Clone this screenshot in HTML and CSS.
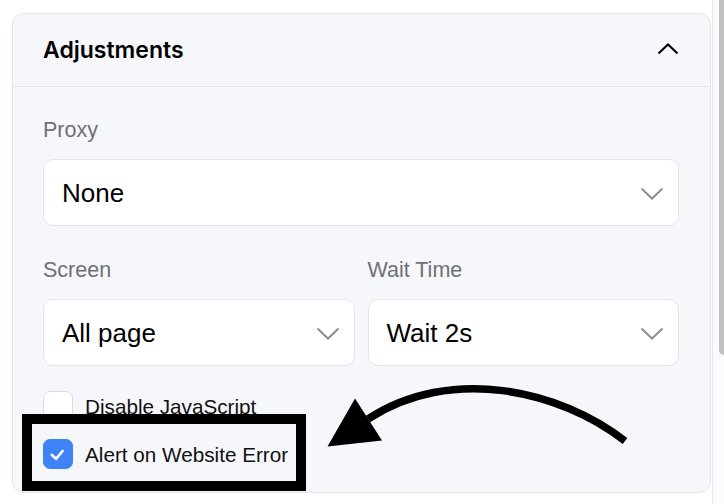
FILE: index.html
```html
<!DOCTYPE html>
<html>
<head>
<meta charset="utf-8">
<link rel="stylesheet" href="styles.css">
</head>
<body>
<div class="page">
  <div class="main">
    <section class="card">
      <header class="card-header">
        <h2 class="title">Adjustments</h2>
        <svg class="chev-up" width="22" height="12" viewBox="0 0 22 12"><path d="M1.5 10.5 L11 1.5 L20.5 10.5" fill="none" stroke="#000" stroke-width="2"/></svg>
      </header>
      <div class="card-body">
        <div class="field first">
          <div class="label">Proxy</div>
          <div class="select">
            <span>None</span>
            <svg class="chev" width="24" height="13" viewBox="0 0 24 13"><path d="M1.5 1.5 L12 11.5 L22.5 1.5" fill="none" stroke="#8d8d93" stroke-width="2"/></svg>
          </div>
        </div>
        <div class="row">
          <div class="field">
            <div class="label">Screen</div>
            <div class="select">
              <span>All page</span>
              <svg class="chev" width="24" height="13" viewBox="0 0 24 13"><path d="M1.5 1.5 L12 11.5 L22.5 1.5" fill="none" stroke="#8d8d93" stroke-width="2"/></svg>
            </div>
          </div>
          <div class="field">
            <div class="label">Wait Time</div>
            <div class="select">
              <span>Wait 2s</span>
              <svg class="chev" width="24" height="13" viewBox="0 0 24 13"><path d="M1.5 1.5 L12 11.5 L22.5 1.5" fill="none" stroke="#8d8d93" stroke-width="2"/></svg>
            </div>
          </div>
        </div>
        <div class="checks">
          <label class="check">
            <span class="box"></span>
            <span class="check-text">Disable JavaScript</span>
          </label>
          <label class="check">
            <span class="box checked">
              <svg width="30" height="30" viewBox="0 0 30 30"><path d="M8.7 15.8 L13 19.8 L19.6 12" fill="none" stroke="#fff" stroke-width="2.6" stroke-linecap="round" stroke-linejoin="round"/></svg>
            </span>
            <span class="check-text">Alert on Website Error</span>
          </label>
        </div>
      </div>
    </section>
  </div>
  <div class="scrollbar"><div class="thumb"></div></div>
</div>
<div class="highlight"></div>
<svg class="arrow" width="724" height="504" viewBox="0 0 724 504">
  <path d="M625 441 C560 390 450 365 368 419" fill="none" stroke="#000" stroke-width="7.5"/>
  <polygon points="327.5,446.5 355,398.5 382,440.5" fill="#000"/>
</svg>
</body>
</html>
```
FILE: styles.css
```css
* { box-sizing: border-box; }
html, body { margin: 0; padding: 0; background: #fff; }
body {
  font-family: "Liberation Sans", Arial, sans-serif;
  color: #111;
  width: 724px;
  height: 504px;
  overflow: hidden;
  position: relative;
}
.page { display: flex; height: 504px; }
.main { flex: 1; padding: 13px 1px 0 12px; }
.scrollbar {
  width: 12px;
  border-left: 1px solid #e6e6e6;
  background: #fbfbfb;
  padding-left: 6px;
}
.thumb {
  width: 8px;
  height: 355px;
  background: #c1c1c1;
  border-radius: 0 0 0 5px;
}
.card {
  border: 1px solid #e3e4ec;
  border-radius: 12px;
  background: #f6f7fb;
  padding-bottom: 23px;
}
.card-header {
  height: 73px;
  border-bottom: 1px solid #e3e4ec;
  display: flex;
  align-items: center;
  justify-content: space-between;
  padding: 0 31px 0 30px;
}
.title {
  margin: 0;
  font-family: Inter, "Liberation Sans", sans-serif;
  font-weight: 600;
  font-size: 23px;
  letter-spacing: 0;
  color: #000;
}
.chev-up { display: block; margin-top: -3px; }
.card-body { padding: 0 31px 0 30px; }
.field { margin-top: 31px; }
.field.first { margin-top: 30px; }
.label {
  font-size: 21.5px;
  line-height: 24px;
  padding-top: 1px;
  margin-bottom: 17px;
  color: #707075;
}
.select {
  height: 67px;
  background: #fff;
  border: 1px solid #e4e5ec;
  border-radius: 10px;
  display: flex;
  align-items: center;
  justify-content: space-between;
  padding: 2px 14px 0 18px;
  font-size: 26px;
  color: #000;
}
.chev { display: block; }
.row {
  display: grid;
  grid-template-columns: 1fr 1fr;
  column-gap: 13px;
}
.checks {
  margin-top: 25px;
  display: flex;
  flex-direction: column;
  gap: 18px;
}
.check { display: flex; align-items: center; gap: 12px; }
.box {
  width: 30px;
  height: 30px;
  border: 1px solid #dcdde3;
  border-radius: 7px;
  background: #fff;
  flex: none;
}
.box.checked {
  background: #3f84f6;
  border-color: #3f84f6;
  position: relative;
}
.box.checked svg { position: absolute; left: -1px; top: -1px; }
.check-text { font-size: 20.7px; color: #111; padding-top: 1px; }
.highlight {
  position: absolute;
  left: 22px;
  top: 414px;
  width: 284px;
  height: 77px;
  border: 10px solid #000;
}
.arrow { position: absolute; left: 0; top: 0; pointer-events: none; }
```
